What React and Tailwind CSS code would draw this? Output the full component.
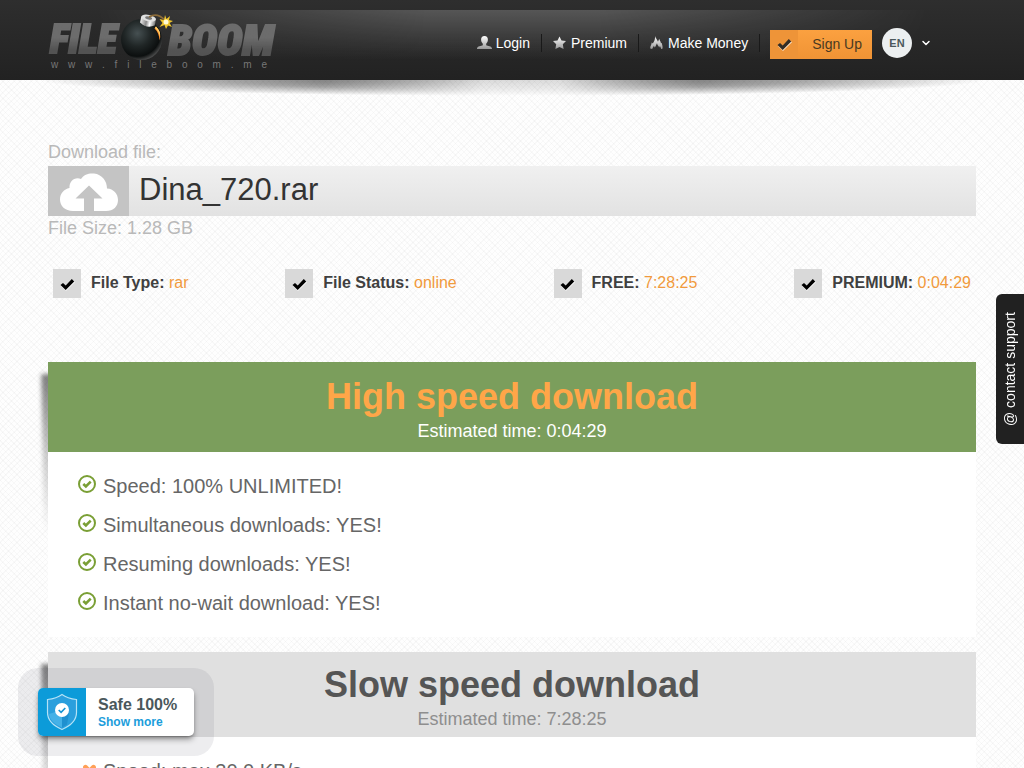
import { useId } from 'react';
import { ChevronDown } from 'lucide-react';

const NAV_LINKS = [
  { label: 'Login', icon: UserIcon },
  { label: 'Premium', icon: StarIcon },
  { label: 'Make Money', icon: FlameIcon },
];

const FILE_INFO = [
  { label: 'File Type:', value: 'rar' },
  { label: 'File Status:', value: 'online' },
  { label: 'FREE:', value: '7:28:25' },
  { label: 'PREMIUM:', value: '0:04:29' },
];

const FAST_FEATURES = [
  'Speed: 100% UNLIMITED!',
  'Simultaneous downloads: YES!',
  'Resuming downloads: YES!',
  'Instant no-wait download: YES!',
];

const SLOW_FEATURES = ['Speed: max 30.0 KB/s'];

export default function App() {
  return (
    <div className="relative h-screen overflow-hidden bg-[#fefefe] bg-[repeating-linear-gradient(45deg,transparent_0_3px,rgba(0,0,0,0.025)_3px_4px),repeating-linear-gradient(-45deg,transparent_0_3px,rgba(0,0,0,0.025)_3px_4px)] font-['Liberation_Sans',Arial,sans-serif]">
      <Header />
      <main className="px-12 pt-[58px]">
        <p className="text-[18px] leading-[28px] text-[#b9b9b9]">Download file:</p>
        <div className="flex h-[50px] bg-linear-to-b from-[#f0f0f0] to-[#e2e2e2]">
          <div className="flex w-[81px] shrink-0 items-end justify-center bg-[#c4c4c4] pb-[5px]">
            <CloudIcon />
          </div>
          <h1 className="px-[10px] text-[31px] leading-[48px] text-[#333]">Dina_720.rar</h1>
        </div>
        <p className="text-[18px] leading-[24px] text-[#b9b9b9]">File Size: 1.28 GB</p>

        <ul className="mt-[29px] flex justify-between px-[5px]">
          {FILE_INFO.map((item) => (
            <li key={item.label} className="flex gap-[10px] text-[16px] leading-[27px]">
              <span className="flex h-[29px] w-[28px] items-center justify-center bg-[#d9d9d9] pt-[2px] text-black">
                <TickIcon />
              </span>
              <span className="text-[#f19a3c]">
                <b className="text-[#404040]">{item.label}</b> {item.value}
              </span>
            </li>
          ))}
        </ul>

        <div className="mt-16 space-y-[15px]">
          <Panel
            title="High speed download"
            time="0:04:29"
            headClass="bg-[#7b9e5c] pt-[15px] pb-[7px] text-white"
            titleClass="text-[#ffa648]"
            features={FAST_FEATURES}
            icon={CircleCheckIcon}
          />
          <Panel
            title="Slow speed download"
            time="7:28:25"
            headClass="bg-[#e0e0e0] pt-[13px] pb-1 text-[#8e8e8e]"
            titleClass="text-[#555]"
            features={SLOW_FEATURES}
            icon={CrossIcon}
          />
        </div>
      </main>
      <button
        type="button"
        className="absolute top-[294px] right-0 flex h-[150px] w-7 rotate-180 items-center justify-center rounded-r-md bg-[#212121] text-[14px] text-white [writing-mode:vertical-rl]"
      >
        @ contact support
      </button>
      <SafeBadge />
    </div>
  );
}

function Header() {
  return (
    <header className="relative h-20 bg-linear-to-b from-[#2e2e2e] to-[#222]">
      <div className="absolute inset-x-[90px] top-[10px] h-[50px] bg-linear-to-b from-white/20 to-transparent [mask-image:linear-gradient(to_right,transparent,black_40%,black_60%,transparent)]" />
      <div className="absolute inset-x-10 top-full h-4 bg-[radial-gradient(50%_100%_at_50%_0%,rgba(0,0,0,0.7),rgba(0,0,0,0.35)_60%,transparent)] [mask-image:linear-gradient(to_right,black_30%,rgba(0,0,0,0.2)_47%,rgba(0,0,0,0.2)_55%,black_70%)]" />
      <div className="relative flex h-full items-start justify-between pr-[92px] pl-12">
        <Logo />
        <div className="flex items-end pt-7">
          <nav className="flex self-center">
            {NAV_LINKS.map(({ label, icon: Icon }) => (
              <a
                key={label}
                href="#"
                className="flex h-[18px] items-center gap-1 border-r border-[#191919] px-[11px] text-[14px] text-white"
              >
                <Icon />
                {label}
              </a>
            ))}
          </nav>
          <a
            href="#"
            className="ml-[10px] flex h-[29px] translate-y-px items-center bg-linear-to-b from-[#fba140] to-[#f09335] text-[14px] text-[#4a3921]"
          >
            <span className="flex h-full w-7 items-center justify-center bg-[#ee9438] text-[#332d26]">
              <TickIcon />
            </span>
            <span className="pr-[10px] pl-[14px]">Sign Up</span>
          </a>
          <button type="button" className="ml-[10px] flex items-center gap-2 text-white">
            <span className="flex size-[30px] items-center justify-center rounded-full bg-[#eceff0] text-[11px] font-bold text-[#4b585c]">
              EN
            </span>
            <ChevronDown size={12} strokeWidth={3} />
          </button>
        </div>
      </div>
    </header>
  );
}

function Logo() {
  return (
    <a
      href="#"
      className="relative block h-[76px] w-[230px] font-['Liberation_Sans_Narrow','Roboto_Condensed','Roboto','Liberation_Sans',sans-serif]"
    >
      <span className="flex justify-between pt-[22px] pr-1 pl-[2px] text-[40px] leading-9 font-black text-[#6c6c6c] italic [-webkit-text-stroke:2px_#6c6c6c] [mask-image:linear-gradient(to_bottom,black_65%,rgba(0,0,0,0.65)_85%)]">
        <span>FILE</span>
        <span className="text-[43px]">BOOM</span>
      </span>
      <BombIcon />
      <span className="flex justify-between pt-px pr-[11px] pl-[3px] font-['Liberation_Sans',sans-serif] text-[10px] leading-3 text-[#777]">
        {'www.fileboom.me'.split('').map((ch, i) => (
          <span key={i}>{ch}</span>
        ))}
      </span>
    </a>
  );
}

function Panel({ title, time, headClass, titleClass, features, icon: Icon }) {
  return (
    <section className="relative">
      <div className="absolute top-3 -left-1 h-[160px] w-4 origin-bottom -rotate-1 bg-linear-to-b from-black/50 via-black/20 to-transparent blur-[2px]" />
      <div className={`relative text-center ${headClass}`}>
        <h2 className={`text-[36px] leading-10 font-bold ${titleClass}`}>{title}</h2>
        <p className="text-[18px] leading-[28px]">Estimated time: {time}</p>
      </div>
      <ul className="relative bg-white px-[30px] pt-[15px] pb-[14px]">
        {features.map((text) => (
          <li key={text} className="flex gap-[7px] text-[20px] leading-[39px] text-[#666]">
            <Icon />
            {text}
          </li>
        ))}
      </ul>
    </section>
  );
}

function SafeBadge() {
  return (
    <aside className="absolute bottom-3 left-[18px] rounded-[20px] bg-[#505064]/10 p-5">
      <div className="flex h-12 w-[156px] overflow-hidden rounded-[5px] bg-white shadow-md shadow-black/40">
        <div className="flex w-12 items-center justify-center bg-[#0c9bd9]">
          <ShieldIcon />
        </div>
        <div className="pt-2 pl-3 font-bold">
          <p className="text-[16px] leading-[18px] text-[#4b585c]">Safe 100%</p>
          <a href="#" className="block text-[12px] leading-4 text-[#1b9ddb]">
            Show more
          </a>
        </div>
      </div>
    </aside>
  );
}

function IconFill({ id }) {
  return (
    <linearGradient id={id} x1="0" y1="0" x2="0" y2="1">
      <stop offset="0" stopColor="#fff" />
      <stop offset="1" stopColor="#999" />
    </linearGradient>
  );
}

function UserIcon() {
  const id = useId();
  return (
    <svg width="15" height="14" viewBox="0 0 15 14">
      <IconFill id={id} />
      <path fill={`url(#${id})`} d="M7.500 0C5.300 0 4 1.500 4.100 3.600c0 1.800.7 3.200 1.700 4.100v1.500C4.500 10 .3 9.900 0 12.500V13h15v-.5c-.3-2.600-4.500-2.500-5.800-3.300V7.700c1-.9 1.700-2.300 1.700-4.100C11 1.500 9.700 0 7.500 0z" />
    </svg>
  );
}

function StarIcon() {
  const id = useId();
  return (
    <svg width="14" height="14" viewBox="0 0 14 14">
      <IconFill id={id} />
      <path fill={`url(#${id})`} d="M6.500 .5l2 4 4.500.5-3.200 3.200.8 4.800-4.100-2.100L2.400 13l.8-4.800L0 5l4.500-.5z" />
    </svg>
  );
}

function FlameIcon() {
  const id = useId();
  return (
    <svg width="14" height="14" viewBox="0 0 14 14">
      <IconFill id={id} />
      <path fill={`url(#${id})`} d="M5 0c.5 2.200 2.300 3.500 3 5.800l1.200-3c.4 1.700 1.600 2.600 1.800 4.600l.9-.7c-.2 2 1.200 3.300.5 6.100l-1.300.3c0-1.400-.8-2-1.100-3.200l-.9 1.500C8.700 9.800 7.200 9 7 7.200 6.200 8.500 6 10 4.700 11.500L3.900 9.800C3.500 11 2.700 11.500 2.200 13L.3 12.500C-.1 10 1.700 9 1.700 6.500l1.200 1C3.700 5.500 5.400 4.200 5 0z" />
    </svg>
  );
}

function TickIcon() {
  return (
    <svg width="15" height="13" viewBox="0 0 15 13">
      <path fill="#fff" fillOpacity=".7" d="M1 8l2.500-2L6 8.300 12.200 2 15 4.200 6 13z" />
      <path fill="currentColor" d="M.5 7L3 5l2.700 2.500L11.800 1l2.400 2.400L5.700 12z" />
    </svg>
  );
}

function CloudIcon() {
  return (
    <svg width="58" height="38" viewBox="0 0 58 38">
      <path
        fill="#fff"
        d="M13 38C5 38 0 33 0 26.500 0 20.500 4 16 9.500 15 9 8 15 3.500 21 6 24 1.500 29 0 34 .6 42 1.500 47 8 47 15.500 53.500 16 58 20.500 58 27c0 6.500-4.500 11-12 11H34V25.500h8.500L29 12.500 15.500 25.500H24V38z"
      />
    </svg>
  );
}

function CircleCheckIcon() {
  return (
    <svg className="mt-2 shrink-0" width="18" height="18" viewBox="0 0 18 18" fill="none" stroke="#7a9f35">
      <circle cx="9" cy="9" r="8" strokeWidth="2" />
      <path d="M5.300 9l2.600 2.500 4.800-4.800" strokeWidth="2.600" />
    </svg>
  );
}

function CrossIcon() {
  return (
    <svg className="mt-2 shrink-0" width="18" height="18" viewBox="0 0 18 18" fill="none">
      <path d="M7.500 7.300l8 8M15.500 7.300l-8 8" stroke="#ffa056" strokeWidth="4.800" strokeLinecap="round" />
    </svg>
  );
}

function ShieldIcon() {
  return (
    <svg width="32" height="38" viewBox="0 0 32 38">
      <path fill="#2a9fdd" stroke="#b4e2f6" strokeWidth="1.200" d="M16 1.500C12 4.500 6 6 1.500 6.500v13C1.500 27.500 8 33 16 36.500c8-3.500 14.500-9 14.500-17v-13C26 6 20 4.500 16 1.500z" />
      <path fill="#45b1e7" d="M3 21l13-4v17.500C9 31.500 3.500 27 3 21z" />
      <path fill="#1f90cf" d="M16 17l7 3-2 11.500-5 3z" />
      <circle cx="16" cy="17" r="7" fill="#fff" />
      <path fill="none" stroke="#1794d3" strokeWidth="1.600" d="M12.700 17l2.400 2.400 4.200-4.400" />
    </svg>
  );
}

function BombIcon() {
  const id = useId();
  return (
    <svg className="absolute top-3 left-[69px]" width="56" height="50" viewBox="0 0 56 50">
      <defs>
        <radialGradient id={id} cx=".4" cy=".35" r=".7">
          <stop offset="0" stopColor="#465052" />
          <stop offset=".45" stopColor="#202626" />
          <stop offset=".8" stopColor="#0c0f0f" />
          <stop offset="1" stopColor="#5a5a5a" />
        </radialGradient>
        <linearGradient id={`${id}cap`}>
          <stop offset="0" stopColor="#eee" />
          <stop offset=".4" stopColor="#888" />
          <stop offset=".65" stopColor="#fff" />
          <stop offset="1" stopColor="#777" />
        </linearGradient>
      </defs>
      <circle cx="24.500" cy="27.500" r="20.500" fill={`url(#${id})`} />
      <path d="M39 14.500q6 6 3.500 14-.5-8-5-12z" fill="#ff922e" />
      <path d="M39 14.500q5 5 4 10-1-5-5-9z" fill="#ffd36b" />
      <g transform="rotate(12 31 9)">
        <path d="M23.500 6v6q7.500 5 15 0V6z" fill={`url(#${id}cap)`} />
        <ellipse cx="31" cy="6" rx="7.500" ry="3.200" fill="#e1e1e1" />
        <ellipse cx="31" cy="6" rx="3.500" ry="1.500" fill="#777" />
      </g>
      <path d="M32 5Q40 0 48 8" fill="none" stroke="#8b6b39" strokeWidth="1.600" />
      <path d="M48 3l1.500 4L53 4l-1 4 4 1-3.500 2 2.500 4-4-1.500L49 17l-1.500-4-5 2 3-4-3-4 4.500 1z" fill="#f0c52d" />
      <circle cx="49" cy="10" r="2.500" fill="#fffbd7" />
    </svg>
  );
}
